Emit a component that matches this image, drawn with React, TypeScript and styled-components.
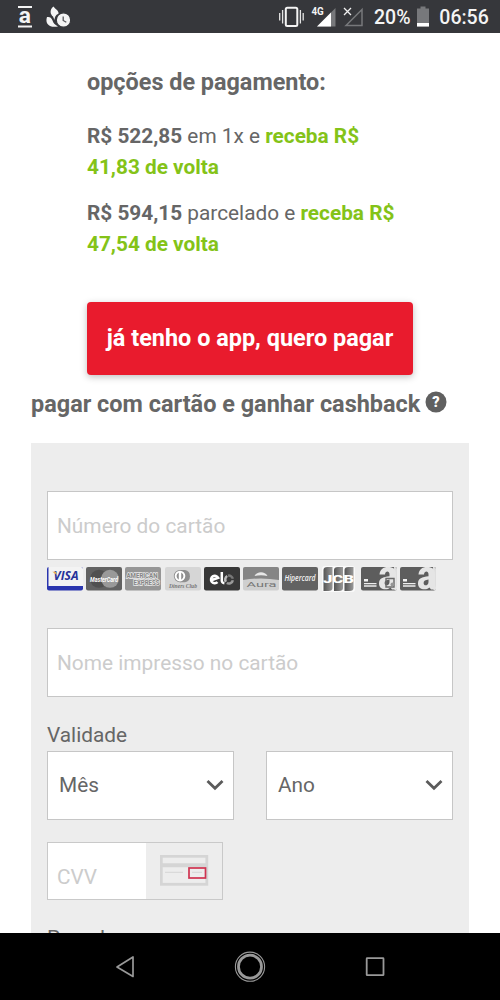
import React from "react";
import styled, { createGlobalStyle } from "styled-components";

const Global = createGlobalStyle`
  * { box-sizing: border-box; }
  html, body { margin: 0; padding: 0; background: #fff; }
  body { font-family: Roboto, "Liberation Sans", sans-serif; color: #666; overflow: hidden; }
`;

const Screen = styled.div`
  width: 500px;
  height: 1000px;
  display: flex;
  flex-direction: column;
  overflow: hidden;
  background: #fff;
`;

const StatusBar = styled.header`
  flex: 0 0 33px;
  display: flex;
  justify-content: space-between;
  background: #36373b;
  svg { display: block; }
`;

const NavBar = styled.nav`
  flex: 0 0 67px;
  background: #000;
  svg { display: block; }
`;

const Page = styled.main`
  flex: 1 1 0;
  min-height: 0;
  overflow: hidden;
  padding: 0 31px;
`;

const Options = styled.section`
  padding: 34px 56px 0;
`;

const Title = styled.h2`
  margin: 0 0 23px;
  font-size: 23.4px;
  line-height: 31px;
  font-weight: 700;
  white-space: nowrap;
`;

const Offer = styled.p`
  margin: 0 0 15px;
  font-size: 20.8px;
  line-height: 31px;
  white-space: nowrap;
`;

const Price = styled.strong`
  font-weight: 700;
`;

const Reward = styled.strong`
  font-weight: 700;
  color: #84c318;
`;

const PayButton = styled.button`
  display: block;
  width: 326px;
  height: 73px;
  margin: 42px 0 0;
  padding: 0;
  border: 0;
  border-radius: 4px;
  background: #e91b2d;
  box-shadow: 0 2px 7px rgba(0, 0, 0, 0.25);
  color: #fff;
  font: 700 23.45px/73px Roboto, "Liberation Sans", sans-serif;
  white-space: nowrap;
`;

const CardHeading = styled.h2`
  display: flex;
  align-items: center;
  gap: 5px;
  height: 31px;
  margin: 14px 0 23px;
  font-size: 23.46px;
  line-height: 31px;
  font-weight: 700;
  white-space: nowrap;
  svg { margin-top: -6px; }
`;

const Panel = styled.form`
  display: flex;
  flex-direction: column;
  height: 560px;
  padding: 48px 16px 0;
  background: #ededed;
`;

const Field = styled.input<{ $gap: number }>`
  flex: none;
  width: 100%;
  height: 69px;
  margin: 0 0 ${(p) => p.$gap}px;
  padding: 1px 9px 0;
  border: 1px solid #c6c6c6;
  border-radius: 0;
  background: #fff;
  font: 400 20.85px Roboto, "Liberation Sans", sans-serif;
  &::placeholder { color: #ccc; opacity: 1; }
`;

const Brands = styled.div`
  display: flex;
  flex: none;
  gap: 3.2px;
  height: 26px;
  margin-bottom: 35px;
  svg { display: block; flex: none; overflow: visible; }
`;

const Label = styled.label`
  flex: none;
  font-size: 20.8px;
  line-height: 30px;
  height: 31px;
`;

const Selects = styled.div`
  display: grid;
  flex: none;
  grid-template-columns: 1fr 1fr;
  gap: 32px;
  margin-bottom: 22px;
`;

const Select = styled.div`
  display: flex;
  align-items: center;
  justify-content: space-between;
  height: 69px;
  padding: 0 9px 1px 11px;
  border: 1px solid #c6c6c6;
  background: #fff;
  font-size: 20.8px;
`;

const CvvBox = styled.div`
  display: flex;
  flex: none;
  width: 176px;
  height: 58px;
  margin-bottom: 23px;
  border: 1px solid #c9c9c9;
`;

const CvvInput = styled.input`
  width: 98px;
  padding: 12px 9px 0;
  border: 0;
  background: #fff;
  font: 400 20.8px Roboto, "Liberation Sans", sans-serif;
  &::placeholder { color: #ccc; opacity: 1; }
`;

const CvvHint = styled.span`
  padding: 12px 0 0 14px;
  svg { display: block; }
`;

const Chevron = () => (
  <svg width="18" height="12" viewBox="0 0 18 12">
    <path d="M1.5 2 L9 9.3 L16.5 2" fill="none" stroke="#5b5b5b" strokeWidth="2.8" />
  </svg>
);

const sans = "Roboto, sans-serif";
const open = "'Open Sans', sans-serif";

type LogoProps = { fill: string; children?: React.ReactNode };
const Logo = ({ fill, children }: LogoProps) => (
  <svg width="36" height="24" viewBox="0 0 36 24">
    <rect width="36" height="23.5" rx="2" fill={fill} />
    {children}
  </svg>
);

const CardLogos = () => (
  <Brands>
    <Logo fill="#2a35ae">
      <path d="M1.5 0 H34 Q36 0 36 2 V19 H1.5 Z" fill="#f3f3f3" />
      <text x="6.5" y="13.3" fontFamily={open} fontSize="11.5" fontWeight="700" fontStyle="italic" fill="#28329a" textLength="25" lengthAdjust="spacingAndGlyphs">VISA</text>
      <path d="M5.3 4.8 H9 L10 8 Z" fill="#e9ae4c" />
    </Logo>
    <Logo fill="#626262">
      <circle cx="13" cy="11.8" r="9" fill="#505050" />
      <circle cx="24" cy="11.8" r="9" fill="#999" />
      <text x="4" y="14.5" fontFamily={sans} fontSize="7.5" fontWeight="700" fontStyle="italic" fill="#fff" textLength="28" lengthAdjust="spacingAndGlyphs">MasterCard</text>
    </Logo>
    <Logo fill="#969696">
      <text x="1.5" y="10.7" fontFamily={sans} fontSize="6.5" fontWeight="700" fill="#858585" stroke="#e8e8e8" strokeWidth="1.4" paintOrder="stroke" textLength="31" lengthAdjust="spacingAndGlyphs">AMERICAN</text>
      <text x="8.5" y="17.5" fontFamily={sans} fontSize="6.5" fontWeight="700" fill="#858585" stroke="#e8e8e8" strokeWidth="1.4" paintOrder="stroke" textLength="26" lengthAdjust="spacingAndGlyphs">EXPRESS</text>
    </Logo>
    <Logo fill="#d6d6d6">
      <path d="M15 3 H20 A6.3 6.3 0 0 1 20 15.3 H15 Z" fill="#8f8f8f" />
      <circle cx="15" cy="9.1" r="6.2" fill="#8f8f8f" />
      <circle cx="15" cy="9.1" r="5.3" fill="#fff" />
      <path d="M13.8 5.5 A4 4 0 0 0 13.8 12.7 Z M16.2 5.5 A4 4 0 0 1 16.2 12.7 Z" fill="#8f8f8f" />
      <text x="4" y="21.3" fontFamily="'Liberation Serif', serif" fontSize="7" fontWeight="700" fontStyle="italic" fill="#777" textLength="28" lengthAdjust="spacingAndGlyphs">Diners Club</text>
    </Logo>
    <Logo fill="#383838">
      <g fill="none" strokeWidth="2.5">
        <path d="M7.3 13.2 L14.2 10.8 A3.8 3.8 0 1 0 13.5 15.2" stroke="#fff" />
        <path d="M17.8 5 V14 Q18 16 20.4 16.3" stroke="#fff" />
        <path d="M22 14.8 A4 4 0 0 1 23.2 9" stroke="#bbb" />
        <path d="M24 8.7 A4 4 0 0 1 28.8 11.7" stroke="#777" />
        <path d="M28.8 13.2 A4 4 0 0 1 22.8 16" stroke="#999" />
      </g>
    </Logo>
    <Logo fill="#cfcfcf">
      <path d="M0 13 V2 Q0 0 2 0 H34 Q36 0 36 2 V13 Q18 9.8 0 13Z" fill="#858585" />
      <path d="M11.5 9 C14 4 22 4 24.5 9 Q18 7.7 11.5 9Z" fill="#e8e8e8" />
      <text x="3.5" y="20.4" fontFamily={sans} fontSize="7.2" fill="#777" textLength="30" lengthAdjust="spacingAndGlyphs">Aura</text>
    </Logo>
    <Logo fill="#626262">
      <text x="2.5" y="13.8" fontFamily={open} fontSize="8" fontStyle="italic" fontWeight="600" fill="#f2f2f2" textLength="31" lengthAdjust="spacingAndGlyphs">Hipercard</text>
    </Logo>
    <svg width="36" height="24" viewBox="0 0 36 24">
      <defs>
        <linearGradient id="jcb"><stop stopColor="#555" /><stop offset="1" stopColor="#999" /></linearGradient>
      </defs>
      <rect x="1" y="-1" width="33" height="26" rx="3" fill="#fafafa" />
      {[2.5, 13, 23.5].map((x) => (
        <path key={x} d={`M${x} 24 V3 Q${x} 0 ${x + 4} 0 H${x + 9} V21 Q${x + 9} 24 ${x + 5} 24Z`} fill="url(#jcb)" />
      ))}
      <text x="2" y="15.8" fontFamily={sans} fontSize="10.5" fontWeight="900" fill="#fff" textLength="31" lengthAdjust="spacingAndGlyphs">JCB</text>
    </svg>
    {[true, false].map((dot) => (
      <Logo key={String(dot)} fill="#5d5d5d">
        <path d="M33 0 H34 Q36 0 36 2 V21.5 Q36 23.5 34 23.5 L31.5 19 Z" fill="#dedede" />
        <rect x="3" y="12" width="4" height="2.5" fill="#f2f2f2" />
        <path d="M3 16.7 H15.5 M3 19 H15.5" stroke="#eee" strokeWidth="1.3" />
        <path d="M18.5 7.5 C19 2.5 22 0 27 0 C32.5 0 35 2.5 35 7 V18 Q35 19.5 36 20 V22.5 H31 L29.5 20.5 C25.5 24 17.8 22.5 18 16.5 C18 11 22 10 28.5 9.2 V7.3 C28.5 3.7 24.3 3.7 24 7.5Z M28.5 12.5 C25.5 13 23.6 13.5 23.6 16 C23.6 19.5 28.5 19 28.5 15Z" fill="#e5e5e5" fillRule="evenodd" />
        {dot && (
          <>
            <path d="M25 11.5 H33 V20 H25Z" fill="none" stroke="#696969" strokeWidth="1.4" />
            <circle cx="31.5" cy="17.5" r="2" fill="#959595" />
          </>
        )}
      </Logo>
    ))}
  </Brands>
);

const LeftStatus = () => (
  <svg width="90" height="33" viewBox="0 0 90 33" aria-hidden="true">
    <path d="M18 7 H32 M18 26.5 H32" stroke="#f4f4f4" strokeWidth="2" />
    <text x="18.8" y="23" fontFamily={sans} fontSize="22" fontWeight="700" fill="#f4f4f4" textLength="12.2" lengthAdjust="spacingAndGlyphs">a</text>
    <path d="M53.5 6.5 C49 10 50.5 14.5 53 16.5 Q54 18.8 54.4 20 C54.8 17 55.5 15 58.5 13.7 C59 10.5 55.5 9.5 53.5 6.5Z" fill="#f4f4f4" />
    <path d="M47 17 C49.5 16.5 51.5 17.5 52.5 20.5 C53.3 23 54.6 24.6 58 26.4 C50 28 45.8 24.5 46.5 19Z" fill="#f4f4f4" />
    <circle cx="63.5" cy="20" r="7.2" fill="#f4f4f4" stroke="#36373b" strokeWidth="1.2" />
    <path d="M63.2 16.5 V20.5 L66.3 22.3" fill="none" stroke="#55565a" strokeWidth="1.3" />
  </svg>
);

const RightStatus = () => (
  <svg width="250" height="33" viewBox="0 0 250 33">
    <rect x="35.8" y="7.7" width="11.5" height="18.3" rx="1.5" fill="none" stroke="#f4f4f4" strokeWidth="2" />
    <path d="M32.6 10 V23.5 M50.4 10 V23.5 M29.7 13 V20.5 M53.2 13 V20.5" stroke="#e4e4e4" strokeWidth="1.3" />
    <text x="61.5" y="15" fontFamily={sans} fontSize="11" fontWeight="700" fill="#f4f4f4" textLength="12.3" lengthAdjust="spacingAndGlyphs">4G</text>
    <path d="M67 26.5 L85.5 8 V26.5Z" fill="#77787b" />
    <path d="M67 26.5 L81 12.5 V26.5Z" fill="#fff" />
    <path d="M94 8 L101 15 M101 8 L94 15" stroke="#f0f0f0" strokeWidth="1.3" />
    <path d="M96 25.5 L112 9.5 V25.5Z" fill="none" stroke="#77787b" strokeWidth="1.5" />
    <text x="124" y="24.3" fontFamily={sans} fontSize="20" fontWeight="500" fill="#f4f4f4" textLength="36.5" lengthAdjust="spacingAndGlyphs">20%</text>
    <path d="M170.5 6.5 H175.5 V8.5 H179 V26.5 H167 V8.5 H170.5Z" fill="#77787b" />
    <rect x="167" y="23" width="12" height="3.5" fill="#fff" />
    <text x="189.3" y="24.3" fontFamily={sans} fontSize="20" fontWeight="500" fill="#f4f4f4" textLength="49.5" lengthAdjust="spacingAndGlyphs">06:56</text>
  </svg>
);

export default function App() {
  return (
    <>
      <Global />
      <Screen>
        <StatusBar>
          <LeftStatus />
          <RightStatus />
        </StatusBar>
        <Page>
          <Options>
            <Title>opções de pagamento:</Title>
            <Offer>
              <Price>R$ 522,85</Price> em 1x e <Reward>receba R$<br />41,83 de volta</Reward>
            </Offer>
            <Offer>
              <Price>R$ 594,15</Price> parcelado e <Reward>receba R$<br />47,54 de volta</Reward>
            </Offer>
            <PayButton type="button">já tenho o app, quero pagar</PayButton>
          </Options>
          <CardHeading>
            pagar com cartão e ganhar cashback
            <svg width="22" height="22" viewBox="0 0 22 22">
              <circle cx="11" cy="11" r="10.5" fill="#606060" />
              <text x="11" y="16" textAnchor="middle" fontFamily={sans} fontSize="14.5" fontWeight="900" fill="#fff">?</text>
            </svg>
          </CardHeading>
          <Panel>
            <Field $gap={7} placeholder="Número do cartão" />
            <CardLogos />
            <Field $gap={23} placeholder="Nome impresso no cartão" />
            <Label>Validade</Label>
            <Selects>
              <Select>Mês<Chevron /></Select>
              <Select>Ano<Chevron /></Select>
            </Selects>
            <CvvBox>
              <CvvInput placeholder="CVV" />
              <CvvHint>
                <svg width="50" height="32" viewBox="0 0 50 32">
                  <rect x="1.3" y="1.3" width="45.5" height="28" fill="none" stroke="#d5d5d5" strokeWidth="2.8" />
                  <path d="M0 10.3 H48" stroke="#d5d5d5" strokeWidth="4" />
                  <path d="M5 17.3 H23 M32 17.3 H42" stroke="#dadada" strokeWidth="1.3" />
                  <rect x="29" y="13" width="16.5" height="10" fill="none" stroke="#cf3350" strokeWidth="1.7" />
                </svg>
              </CvvHint>
            </CvvBox>
            <Label>Parcelas</Label>
          </Panel>
        </Page>
        <NavBar>
          <svg width="500" height="67" viewBox="0 0 500 67">
            <g fill="none" stroke="#999">
              <path d="M117 34 L133 24 V43.5Z" strokeWidth="1.7" strokeLinejoin="round" />
              <circle cx="250" cy="33.7" r="14.6" strokeWidth="1.1" />
              <circle cx="250" cy="33.7" r="11.5" strokeWidth="2.8" />
              <rect x="366.7" y="25.2" width="16.8" height="17" rx=".5" strokeWidth="1.8" />
            </g>
          </svg>
        </NavBar>
      </Screen>
    </>
  );
}
